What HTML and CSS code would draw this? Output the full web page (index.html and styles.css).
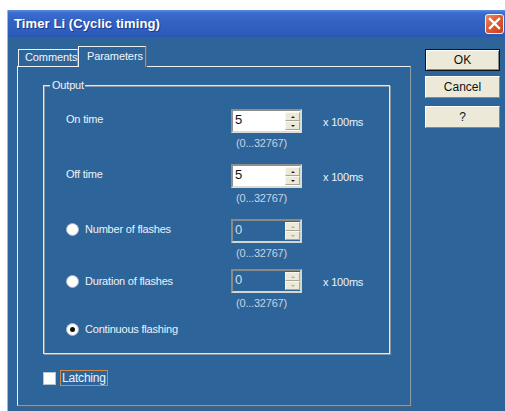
FILE: index.html
```html
<!DOCTYPE html>
<html lang="en">
<head>
<meta charset="utf-8">
<title>Timer Li (Cyclic timing)</title>
<link rel="stylesheet" href="styles.css">
</head>
<body>
<div class="window">
  <div class="titlebar">
    <span class="title">Timer Li (Cyclic timing)</span>
    <span class="close">
      <svg width="13" height="13" viewBox="0 0 13 13"><path d="M2 2 L11 11 M11 2 L2 11" stroke="#fff" stroke-width="2.4" stroke-linecap="square"/></svg>
    </span>
  </div>
  <div class="client">
    <div class="tabsection">
      <div class="tabstrip">
        <div class="tab">Comments</div>
        <div class="tab active">Parameters</div>
      </div>
      <div class="panel">
        <div class="group">
          <span class="legend">Output</span>

          <div class="field f1">
            <span class="lbl">On time</span>
            <div class="spin">
              <span class="val">5</span>
              <span class="arrows"><i class="up"></i><i class="down"></i></span>
            </div>
            <span class="unit">x 100ms</span>
            <span class="range">(0...32767)</span>
          </div>

          <div class="field f2">
            <span class="lbl">Off time</span>
            <div class="spin">
              <span class="val">5</span>
              <span class="arrows"><i class="up"></i><i class="down"></i></span>
            </div>
            <span class="unit">x 100ms</span>
            <span class="range">(0...32767)</span>
          </div>

          <div class="field f3">
            <span class="lbl"><span class="radio"></span>Number of flashes</span>
            <div class="spin disabled">
              <span class="val">0</span>
              <span class="arrows"><i class="up"></i><i class="down"></i></span>
            </div>
            <span class="range">(0...32767)</span>
          </div>

          <div class="field f4">
            <span class="lbl"><span class="radio"></span>Duration of flashes</span>
            <div class="spin disabled">
              <span class="val">0</span>
              <span class="arrows"><i class="up"></i><i class="down"></i></span>
            </div>
            <span class="unit">x 100ms</span>
            <span class="range">(0...32767)</span>
          </div>

          <div class="choice">
            <span class="radio checked"></span>Continuous flashing
          </div>
        </div>

        <div class="latch">
          <span class="check"></span>
          <span class="focus">Latching</span>
        </div>
      </div>
    </div>

    <div class="buttons">
      <div class="btn default">OK</div>
      <div class="btn">Cancel</div>
      <div class="btn help">?</div>
    </div>
  </div>
</div>
</body>
</html>
```

FILE: styles.css
```css
html, body {
  margin: 0;
  padding: 0;
  background: #ffffff;
  overflow: hidden;
}

body {
  font-family: "Liberation Sans", Arial, sans-serif;
  font-size: 11px;
  color: #eef2f7;
}

.window {
  margin: 10px 0 0 7px;
  width: 498px;
  height: 401px;
  background: #2d659b;
  border-left: 1px solid #9cb6df;
  box-sizing: border-box;
}

/* caption bar */
.titlebar {
  height: 27px;
  display: flex;
  align-items: center;
  justify-content: space-between;
  padding: 0 1px 0 6px;
  background: linear-gradient(#5d8de0 0, #3a6cd0 3px, #3263c4 40%, #2d5cbc 85%, #2a57b2 100%);
}

.title {
  font-weight: bold;
  font-size: 13px;
  color: #ffffff;
  text-shadow: 1px 1px 0 #1b3c88;
  letter-spacing: 0.1px;
}

.close {
  width: 19px;
  height: 20px;
  box-sizing: border-box;
  border: 1px solid #f4f4f4;
  border-radius: 3px;
  background: linear-gradient(135deg, #ec8a62 0, #e05a30 45%, #c9401c 100%);
  display: flex;
  align-items: center;
  justify-content: center;
}

/* dialog body */
.client {
  display: flex;
  padding: 9px 0 0 9px;
}

.tabsection {
  width: 394px;
}

.tabstrip {
  height: 20px;
  display: flex;
  align-items: flex-end;
  padding-left: 1px;
}

.tab {
  height: 17px;
  box-sizing: border-box;
  padding: 0 6px 0 6px;
  line-height: 15px;
  border: 1px solid #eef0f2;
  border-bottom: none;
  border-right-color: #7d8c9c;
  color: #f2f5f9;
  letter-spacing: -0.1px;
}

.tab:first-child {
  width: 60px;
}

.tab.active {
  width: 68px;
  height: 21px;
  line-height: 19px;
  margin-bottom: -1px;
  position: relative;
  z-index: 1;
  background: #2d659b;
  padding-left: 8px;
  border-right: 1px solid #8694a3;
  box-shadow: 1px 0 0 #5b6b7c;
}

.panel {
  height: 340px;
  box-sizing: border-box;
  border: 1px solid #f0f0f0;
  border-right-color: #8e99a6;
  border-bottom-color: #8e99a6;
  box-shadow: 1px 1px 0 #55606c;
  padding: 18px 0 0 25px;
}

/* Output group */
.group {
  position: relative;
  width: 347px;
  height: 269px;
  box-sizing: border-box;
  border: 1px solid #e6e8ea;
  box-shadow: 1px 1px 0 #8b96a2, inset 1px 1px 0 #8b96a2;
  padding: 23px 0 0 22px;
  letter-spacing: -0.2px;
}

.legend {
  position: absolute;
  top: -8px;
  left: 6px;
  padding: 0 1px 0 2px;
  line-height: 15px;
  background: #2d659b;
  color: #f0f3f7;
}

.field {
  display: grid;
  grid-template-columns: 165px 71px auto;
  grid-template-rows: 24px 18px;
}

.f2, .f3 { margin-top: 13px; }
.f4 { margin-top: 8px; }

.lbl {
  grid-column: 1;
  grid-row: 1;
  align-self: start;
  height: 20px;
  line-height: 20px;
  display: flex;
  align-items: center;
}

.f4 .lbl {
  margin-top: 2px;
}

.unit {
  grid-column: 3;
  grid-row: 1;
  align-self: center;
  padding-left: 21px;
  padding-top: 1px;
}

.range {
  grid-column: 2 / 4;
  grid-row: 2;
  padding: 2px 0 0 5px;
  line-height: 17px;
  color: #c6d3e3;
}

/* spin edit */
.spin {
  grid-column: 2;
  grid-row: 1;
  display: flex;
  box-sizing: border-box;
  border: 2px solid #8e8e8e;
  border-right-color: #dcdcd4;
  border-bottom-color: #dcdcd4;
  background: #ffffff;
  letter-spacing: 0;
}

.val {
  flex: 1;
  padding-left: 2px;
  font-size: 13px;
  line-height: 18px;
  color: #111111;
}

.arrows {
  width: 15px;
  display: flex;
  flex-direction: column;
  margin: 1px 0 1px 0;
}

.arrows i {
  flex: 1;
  position: relative;
  background: #ece9d8;
  border: 1px solid #f8f7f0;
  border-right-color: #a8a699;
  border-bottom-color: #a8a699;
}

.arrows i::after {
  content: "";
  position: absolute;
  left: 5px;
  top: 3px;
  border-left: 2px solid transparent;
  border-right: 2px solid transparent;
}

.arrows .up::after { border-bottom: 2px solid #222; }
.arrows .down::after { border-top: 2px solid #222; }

.spin.disabled {
  background: #2d659b;
  border-color: #8a8a86;
  border-right-color: #d4d6d0;
  border-bottom-color: #d4d6d0;
}

.spin.disabled .val {
  color: #d6dde6;
}

.spin.disabled .up::after { border-bottom-color: #b2b0a4; }
.spin.disabled .down::after { border-top-color: #b2b0a4; }

/* option buttons */
.radio {
  width: 13px;
  height: 13px;
  box-sizing: border-box;
  border-radius: 50%;
  border: 1px solid #a9b4c0;
  background: #ffffff;
  margin: 0 6px 0 0;
  flex: none;
  position: relative;
}

.radio.checked::after {
  content: "";
  position: absolute;
  left: 3px;
  top: 3px;
  width: 5px;
  height: 5px;
  border-radius: 50%;
  background: #111111;
}

.choice {
  margin-top: 10px;
  height: 16px;
  display: flex;
  align-items: center;
}

/* checkbox */
.latch {
  margin-top: 16px;
  display: flex;
  align-items: center;
}

.check {
  width: 13px;
  height: 13px;
  box-sizing: border-box;
  border: 1px solid #b8c2cc;
  background: #ffffff;
  margin-right: 4px;
}

.focus {
  border: 1px solid #d08a44;
  padding: 0 1px 0 1px;
  line-height: 14px;
  font-size: 12px;
  letter-spacing: -0.2px;
}

/* command buttons */
.buttons {
  margin: 3px 0 0 14px;
  display: flex;
  flex-direction: column;
}

.btn {
  width: 75px;
  height: 22px;
  box-sizing: border-box;
  background: #ece9d8;
  border: 1px solid #ffffff;
  border-right-color: #8b8a80;
  border-bottom-color: #8b8a80;
  color: #111111;
  font-size: 12px;
  line-height: 20px;
  text-align: center;
  margin-bottom: 5px;
}

.btn.default {
  border: 1px solid #111111;
  box-shadow: inset 1px 1px 0 #ffffff, inset -1px -1px 0 #8b8a80;
}

.btn.help {
  margin-top: 3px;
}
```
